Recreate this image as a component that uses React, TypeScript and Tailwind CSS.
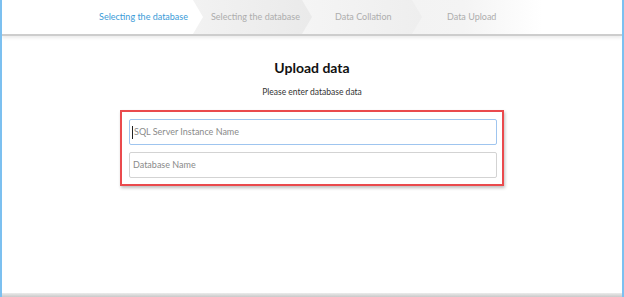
import React from "react";

const chevron =
  "[clip-path:polygon(0_0,calc(100%-10px)_0,100%_50%,calc(100%-10px)_100%,0_100%)]";

export default function App() {
  return (
    <div
      className="relative w-[624px] h-[297px] bg-white overflow-hidden flex flex-col border-l-2 border-r-2 border-[#7cc0f0]"
      style={{ fontFamily: 'Lato, "Noto Sans", sans-serif' }}
    >
      {/* Steps header */}
      <div className="relative z-10 flex h-[36px] shrink-0 border-b-2 border-[#cdcdcd] shadow-[0_2px_3px_rgba(0,0,0,0.08)]">
        <div
          className={`relative z-40 w-[201px] h-full bg-white flex items-center justify-end pr-[15px] -mr-[10px] ${chevron}`}
        >
          <span className="text-[9px] text-[#3b9bd8]">Selecting the database</span>
        </div>
        <div
          className={`relative z-30 w-[119px] h-full bg-[linear-gradient(90deg,#f2f2f2,#eaeaea)] flex items-center pl-[18px] -mr-[10px] ${chevron}`}
        >
          <span className="text-[9px] text-[#adadad] whitespace-nowrap">
            Selecting the database
          </span>
        </div>
        <div
          className={`relative z-20 w-[120px] h-full bg-[linear-gradient(90deg,#f5f5f5,#eeeeee)] flex items-center pl-[33px] -mr-[10px] ${chevron}`}
        >
          <span className="text-[9px] text-[#adadad] whitespace-nowrap">Data Collation</span>
        </div>
        <div className="relative z-10 w-[130px] h-full bg-[linear-gradient(90deg,#f3f3f3,#f4f4f4_40%,#ffffff)] flex items-center pl-[35px]">
          <span className="text-[9px] text-[#adadad] whitespace-nowrap">Data Upload</span>
        </div>
        <div className="flex-1 bg-white" />
      </div>

      {/* Content */}
      <div className="flex-1 flex flex-col items-center">
        <h1 className="mt-[22px] text-[14px] leading-[19px] font-bold text-[#111]">
          Upload data
        </h1>
        <p className="mt-[9px] text-[8.5px] leading-[12px] text-[#333]">
          Please enter database data
        </p>
        <div className="mt-[12px] w-[384px] border-2 border-[#ea4a4d] shadow-[1px_2px_3px_rgba(0,0,0,0.25)] pl-[7px] pr-[5px] pt-[7px] pb-[6px] flex flex-col gap-[7px]">
          <div className="h-[26px] rounded-[2px] border border-[#9fc5ef] flex items-center pl-[2px]">
            <span className="w-px h-[13px] bg-[#222] mr-[1px]" />
            <span className="text-[9px] text-[#8a8a8a]">SQL Server Instance Name</span>
          </div>
          <div className="h-[26px] rounded-[2px] border border-[#d3d3d3] flex items-center pl-[3px]">
            <span className="text-[9px] text-[#8a8a8a]">Database Name</span>
          </div>
        </div>
      </div>

      {/* Bottom bar */}
      <div className="h-[4px] shrink-0 bg-[linear-gradient(180deg,#ececec,#c9c9c9)]" />
    </div>
  );
}
